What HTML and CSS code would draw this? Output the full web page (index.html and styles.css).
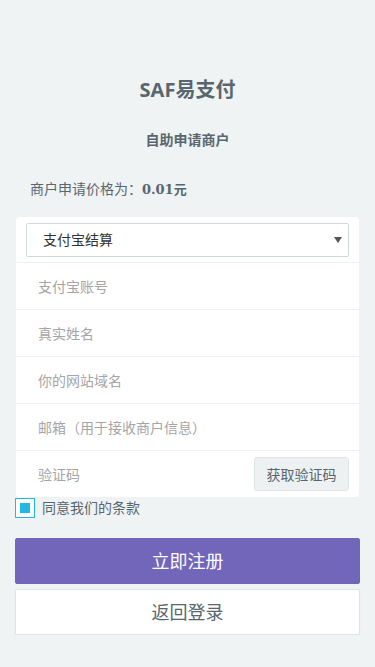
FILE: index.html
```html
<!DOCTYPE html>
<html lang="zh-CN">
<head>
  <meta charset="UTF-8" />
  <meta name="viewport" content="width=device-width, initial-scale=1.0"/>
  <title>SAF易支付 - 自助申请商户</title>
  <link rel="stylesheet" href="styles.css">
</head>
<body>
  <div class="page">
    <header>
      <h1 class="brand">SAF易支付</h1>
      <h2 class="subtitle">自助申请商户</h2>
      <p class="price">商户申请价格为：<b>0.01元</b></p>
    </header>

    <form class="form">
      <div class="card">
        <div class="row row-select">
          <div class="select-wrap">
            <select class="select">
              <option>支付宝结算</option>
              <option>微信结算</option>
            </select>
            <svg class="caret" width="8" height="6" viewBox="0 0 8 6"><path d="M0 0h8L4 6z" fill="#555"/></svg>
          </div>
        </div>
        <div class="row"><input class="input" type="text" placeholder="支付宝账号"></div>
        <div class="row"><input class="input" type="text" placeholder="真实姓名"></div>
        <div class="row"><input class="input" type="text" placeholder="你的网站域名"></div>
        <div class="row"><input class="input" type="text" placeholder="邮箱（用于接收商户信息）"></div>
        <div class="row row-code">
          <input class="input" type="text" placeholder="验证码">
          <button type="button" class="btn-code">获取验证码</button>
        </div>
      </div>

      <label class="agree">
        <span class="check"><span class="check-dot"></span></span>
        同意我们的条款
      </label>

      <button type="button" class="btn btn-primary">立即注册</button>
      <button type="button" class="btn btn-default">返回登录</button>
    </form>
  </div>
</body>
</html>
```

FILE: styles.css
```css
* {
  box-sizing: border-box;
}

body {
  margin: 0;
  background-color: #f0f3f4;
  color: #58666e;
  font-family: "Open Sans", "Noto Sans CJK SC", sans-serif;
  font-size: 14px;
}

header {
  text-align: center;
}

.brand {
  margin: 78px 0 0;
  font-size: 20px;
  line-height: 24px;
  font-weight: bold;
}

.subtitle {
  margin: 28px 0 0;
  font-size: 14px;
  line-height: 20px;
  font-weight: bold;
}

.price {
  margin: 29px 0 0;
  padding-left: 30px;
  text-align: left;
  font-size: 14px;
  line-height: 20px;
}

.price b {
  font-family: "DejaVu Serif", "Noto Sans CJK SC", serif;
  font-size: 13px;
}

.form {
  padding: 0 15px;
}

.card {
  margin: 17px 1px 0;
  background: #fff;
  border-radius: 4px;
  overflow: hidden;
}

.row {
  display: flex;
  align-items: center;
  height: 47px;
  border-bottom: 1px solid #edf1f2;
}

.row:last-child {
  border-bottom: none;
  height: 46px;
}

.row-select {
  height: 46px;
  padding: 0 10px;
}

.select-wrap {
  position: relative;
  width: 100%;
}

.select {
  appearance: none;
  -webkit-appearance: none;
  display: block;
  width: 100%;
  height: 34px;
  padding: 0 16px;
  border: 1px solid #cfdadd;
  border-radius: 2px;
  background: #fff;
  color: #333;
  font-family: inherit;
  font-size: 14px;
  outline: none;
}

.caret {
  position: absolute;
  right: 7px;
  top: 14px;
}

.input {
  flex: 1;
  min-width: 0;
  height: 100%;
  padding: 0 22px;
  border: none;
  background: transparent;
  color: #333;
  font-family: inherit;
  font-size: 14px;
  outline: none;
}

.input::placeholder {
  color: #a5a5a5;
}

.row-code {
  padding-right: 10px;
}

.btn-code {
  height: 34px;
  width: 95px;
  border: 1px solid #dee5e7;
  border-radius: 3px;
  background: #edf1f2;
  color: #58666e;
  font-family: inherit;
  font-size: 14px;
}

.agree {
  display: flex;
  align-items: center;
  gap: 7px;
  height: 21px;
  line-height: 20px;
  color: #58666e;
}

.check {
  display: flex;
  align-items: center;
  justify-content: center;
  width: 20px;
  height: 20px;
  border: 1px solid #23b7e5;
  background: #fff;
}

.check-dot {
  width: 10px;
  height: 10px;
  background: #23b7e5;
}

.btn {
  display: block;
  width: 100%;
  height: 46px;
  border-radius: 2px;
  font-family: inherit;
  font-size: 18px;
  line-height: 20px;
}

.btn-primary {
  margin-top: 20px;
  border: 1px solid #7266ba;
  background: #7266ba;
  color: #fff;
}

.btn-default {
  margin-top: 5px;
  border: 1px solid #dee5e7;
  background: #fff;
  color: #58666e;
  box-shadow: 0 1px 1px rgba(90, 90, 90, 0.1);
}
```
